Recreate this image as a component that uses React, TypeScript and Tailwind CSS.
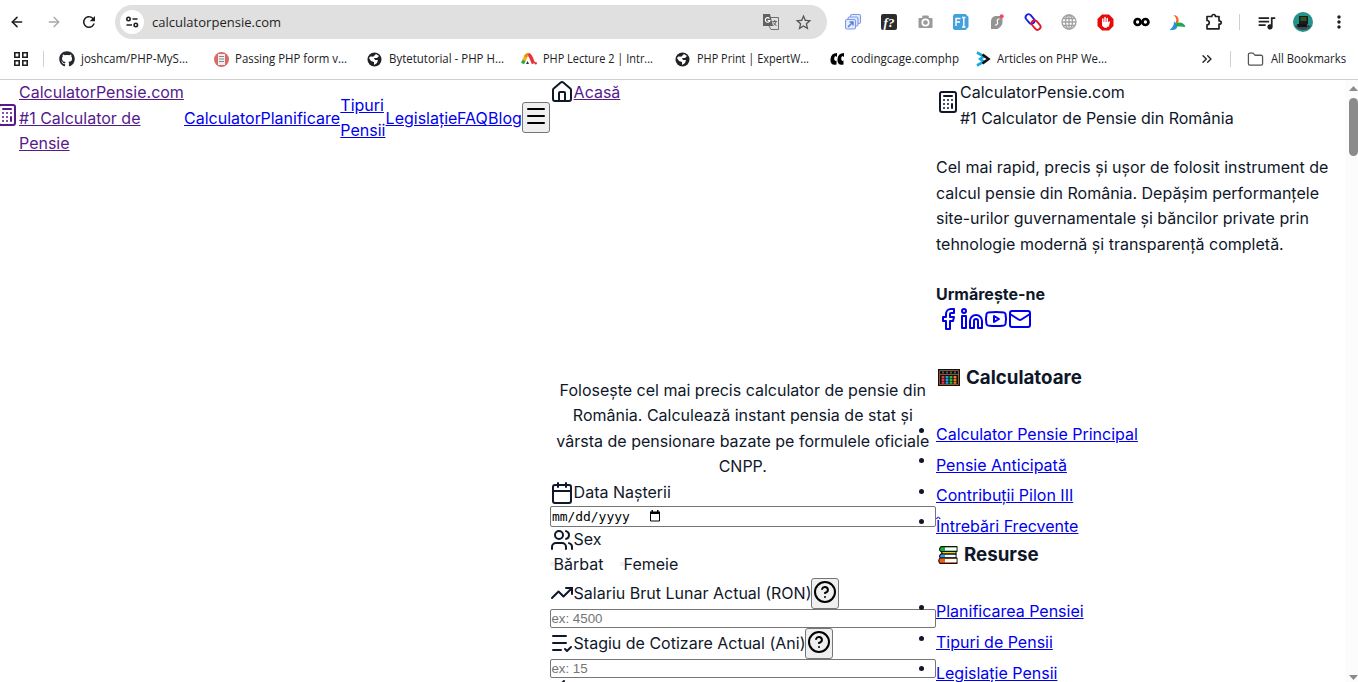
import React from 'react';
import {
  ArrowLeft, ArrowRight, Calculator, Menu, House, Calendar, Users, TrendingUp,
  CircleQuestionMark, Facebook, Linkedin, Youtube, Mail, Folder, ChevronsRight,
} from 'lucide-react';
import { FaGithub } from 'react-icons/fa';
import { MdRefresh, MdQueueMusic, MdStarBorder, MdMoreVert } from 'react-icons/md';

const Cell = ({ w = 'w-9', children }: { w?: string; children: React.ReactNode }) => (
  <div className={`${w} flex h-full shrink-0 items-center justify-center`}>{children}</div>
);

const Tune = () => (
  <svg width="14" height="14" viewBox="0 0 14 14" fill="none" stroke="#202124" strokeWidth="1.6">
    <circle cx="3.5" cy="4" r="1.7" /><path d="M7.5 4H12.500M1.5 10H7" /><circle cx="10.8" cy="10" r="1.7" />
  </svg>
);

const Extensions = () => (
  <>
    <Cell>
      <svg width="18" height="18" viewBox="0 0 18 18" fill="#e4ebff" stroke="#7b9bea" strokeWidth="1.1">
        <rect x="6.5" y="1.5" width="10" height="9" rx="1.5" /><rect x="4" y="4" width="10" height="9" rx="1.5" /><rect x="1.5" y="6.5" width="10" height="9.5" rx="1.5" />
        <path d="M4 14 9 9M5.5 9H9v3.500" fill="none" stroke="#587fdd" strokeWidth="1.5" />
      </svg>
    </Cell>
    <Cell><div className="flex h-4 w-4 items-center justify-center rounded-[2px] bg-[#2c2c2c] font-['Liberation_Serif',serif] text-[13px] leading-none font-bold text-white italic">f?</div></Cell>
    <Cell>
      <svg width="15" height="14" viewBox="0 0 15 14">
        <path d="M1.500 3h2.700V1.500Q4.200.5 5.200.5h4.600q1 0 1 1V3h2.700q1 0 1 1v8q0 1-1 1h-12q-1 0-1-1V4q0-1 1-1z" fill="#9a9a9a" /><circle cx="7.500" cy="7.500" r="3.200" fill="none" stroke="#fff" strokeWidth="1.700" />
      </svg>
    </Cell>
    <Cell>
      <svg width="16" height="16" viewBox="0 0 16 16">
        <path d="M1.500 0h11l3 3v10l-3 3h-11L0 14.500V1.500z" fill="#43a0de" />
        <path d="M3 12V4.500h4.500M3 8h4M9 3.500h3.500M9 13h3.500M10.800 3.500V13" stroke="#fff" strokeWidth="1.4" fill="none" />
      </svg>
    </Cell>
    <Cell>
      <svg width="14" height="16" viewBox="0 0 14 16">
        <path d="M5.500 2H12.500v6c0 4-3 5.500-5 7H1V8c0-4 2-5.500 4.500-6z" fill="#949494" />
        <path d="M9.500 5c-2.500 0-2.500 1.500-2 3s-.5 3-2.500 3" stroke="#fff" strokeWidth="1.200" fill="none" /><circle cx="11.700" cy="2.200" r="2" fill="#ff4358" />
      </svg>
    </Cell>
    <Cell>
      <svg width="18" height="18" viewBox="0 0 18 18" fill="none" strokeWidth="1.800">
        <rect x="0.800" y="3" width="10.500" height="6" rx="3" transform="rotate(50 6 6)" stroke="#1919e8" />
        <rect x="6.800" y="9" width="10.500" height="6" rx="3" transform="rotate(50 12 12)" stroke="#e31224" />
      </svg>
    </Cell>
    <Cell>
      <svg width="16" height="16" viewBox="0 0 16 16" fill="none" stroke="#a1a1a1" strokeWidth="1.300">
        <circle cx="8" cy="8" r="7" /><ellipse cx="8" cy="8" rx="3.500" ry="7" /><path d="M8 1v14M1 8h14M2 4.500h12M2 11.500h12" />
      </svg>
    </Cell>
    <Cell>
      <svg width="17" height="17" viewBox="0 0 17 17">
        <path d="M5 .5h7L16.500 5v7L12 16.500H5L.5 12V5z" fill="#e50b0b" />
        <path d="M5.800 9V5M8 8V3.500M10.200 8.500V4.500M12.200 8l-1 4" stroke="#fff" strokeWidth="1.500" strokeLinecap="round" /><path d="M5 8h6.800l-.6 4-1.500 1.800H7.500L5.200 12z" fill="#fff" />
      </svg>
    </Cell>
    <Cell>
      <svg width="17" height="10" viewBox="0 0 17 10" fill="none" stroke="#000" strokeWidth="2.700"><circle cx="4.600" cy="5" r="3" /><circle cx="12.400" cy="5" r="3" /></svg>
    </Cell>
    <Cell>
      <svg width="17" height="17" viewBox="0 0 17 17">
        <path d="M4.500 1c4 0 7 4 4 9.500L6.500 9c1.500-3 1-5.500-2-8z" fill="#ef6a22" /><path d="M5 7.500c0 4-1.500 6-4.500 8.500 5 .5 8-.5 8-5.500z" fill="#2492df" /><path d="M7.500 9c4-1.500 8 0 9 4-4-1-7-.5-10-.5z" fill="#23a65a" />
      </svg>
    </Cell>
    <Cell w="w-[38px]">
      <svg width="18" height="18" viewBox="0 0 18 18" fill="none" stroke="#1f1f1f" strokeWidth="1.700" strokeLinejoin="round">
        <path d="M2 3.500h4.800c0-2.700 3.600-2.700 3.600 0H14v4.300c3 0 3 3.400 0 3.400v4.600H2v-4c3 0 3-4.300 0-4.300z" />
      </svg>
    </Cell>
  </>
);

const Toolbar = () => (
  <div className="flex h-11 items-center text-[#1f1f1f]">
    <Cell w="w-[34px]"><ArrowLeft size={16} strokeWidth={2.300} /></Cell>
    <Cell w="w-[39px]"><ArrowRight size={16} color="#a8a8a8" /></Cell>
    <Cell w="w-8"><MdRefresh size={18} /></Cell>
    <div className="ml-[10px] flex h-[34px] w-[712px] shrink-0 items-center rounded-full bg-[#e0e0e0] pl-[5px]">
      <div className="flex h-6 w-6 items-center justify-center rounded-full bg-white"><Tune /></div>
      <span className="ml-2 flex-1 font-['Open_Sans','Noto_Sans',sans-serif] text-[13px] leading-5 tracking-[0.02px]">calculatorpensie.com</span>
      <Cell w="w-8">
        <svg width="18" height="18" viewBox="0 0 18 18">
          <path d="M8 4.500h8.500v12H9L7 13" fill="#e0e0e0" stroke="#707070" /><path d="M1 1h7l3 12H1z" fill="#616161" />
          <path d="M7.500 5.500a2.300 2.300 0 1 0 .4 2H5.700" stroke="#fff" fill="none" strokeWidth="1.100" /><path d="M10.500 8.500H15M12.700 7v1.500m1.300 0c-.5 2-1.500 3-2.500 4m-.2-3 3.200 3.500" stroke="#616161" fill="none" />
        </svg>
      </Cell>
      <Cell w="w-8"><MdStarBorder size={19} color="#555" /></Cell>
      <div className="w-2" />
    </div>
    <div className="w-2 shrink-0" />
    <Extensions />
    <div className="ml-[6px] h-4 w-px shrink-0 bg-[#d5cdcd]" />
    <Cell w="w-[53px]"><MdQueueMusic size={21} /></Cell>
    <div className="flex w-5 shrink-0 justify-center">
      <svg width="20" height="20" viewBox="0 0 20 20">
        <circle cx="10" cy="10" r="10" fill="#249488" /><path d="M2 14q8-4 16 0a10 10 0 0 1-16 0" fill="#3f4850" /><path d="M6 4h9v8H6z" fill="#161e1b" /><path d="M7.500 6h6M7.500 8h6" stroke="#4d8a31" /><path d="M4 12h10v3H5z" fill="#101417" />
      </svg>
    </div>
    <Cell w="w-[52px]"><MdMoreVert size={20} /></Cell>
  </div>
);

const Globe = () => (
  <svg width="15" height="15" viewBox="0 0 15 15" className="ml-px"><circle cx="7.500" cy="7.500" r="7" fill="#202124" /><path d="M2 6c2-3 4 0 5-2L9 2l3 2-2 2H7l1 2 3 0-1 3-3 2 0-3-3-1z" fill="#fff" /><path d="m8 6 4 0-1 2-3-1z" fill="#202124" /></svg>
);

const bookmarks = [
  { label: 'joshcam/PHP-MyS...', w: 'w-[154px]', fit: 107, icon: <FaGithub size={16} color="#24292f" className="ml-px" /> },
  { label: 'Passing PHP form v...', w: 'w-[154px]', fit: 112, icon: <svg width="15" height="15" viewBox="0 0 15 15" className="ml-[2px]"><circle cx="7.500" cy="7.500" r="7.500" fill="#d96a64" /><rect x="4" y="2" width="7" height="11" fill="#eee" /><path d="M5 4.500h5M5 7h5M5 9.500h5" stroke="#888" /></svg> },
  { label: 'Bytetutorial - PHP H...', w: 'w-[154px]', fit: 115, icon: <Globe /> },
  { label: 'PHP Lecture 2 | Intr...', w: 'w-[154px]', fit: 110, icon: <svg width="16" height="12" viewBox="0 0 16 12" fill="none" strokeWidth="3.400" className="ml-px"><path d="M1.500 10.500 4 5.500" stroke="#27a84a" /><path d="M3 7.500 5 3" stroke="#f9b41b" /><path d="M4.300 4Q6 1 8 1.800" stroke="#f18b19" /><path d="M7.500 1.500Q9 2 10 4.500l2.500 6" stroke="#e63337" /><path d="m5 11 1.500-3L8 11z" fill="#333" /><circle cx="14.700" cy="10.300" r="1.200" fill="#e63337" /></svg> },
  { label: 'PHP Print | ExpertW...', w: 'w-[154px]', fit: 112, icon: <Globe /> },
  { label: 'codingcage.comphp', w: 'w-[146px]', fit: 108, icon: <svg width="15" height="12" viewBox="0 0 15 12" fill="#000" className="ml-[2px]"><path d="M7 0v4L5.500 3Q3.500 4 4.500 7q1 1.500 2 .5v4Q0 13 .500 6 1 0 7 0zM14 0v4l-1.500-1q-2 1-1 4 1 1.500 2 .5v4Q7 13 7.500 6 8 0 14 0z" /></svg> },
  { label: 'Articles on PHP We...', w: 'w-[154px]', fit: 110, icon: <svg width="15" height="16" viewBox="0 0 15 16" fill="none" strokeWidth="2.600" className="ml-[2px]"><path d="M1 1.500l7 4-5 3M1 14.500l7-4-5-3" stroke="#1aa9df" /><path d="m6.500 3.500 6 4.500-6 4.500" stroke="#111" /></svg> },
];

const Bookmarks = () => (
  <div className="flex h-9 items-center border-b border-[#cfcfcf] pb-[5px] font-['Open_Sans','Noto_Sans',sans-serif] text-[12px] leading-4 text-[#202124]">
    <Cell w="w-[42px]">
      <svg width="14" height="14" viewBox="0 0 14 14" fill="none" stroke="#1f1f1f" strokeWidth="1.600"><path d="M.8.8h4.400v4.400H.8zM8.800.8h4.400v4.400H8.800zM.8 8.800h4.400v4.400H.8zM8.800 8.800h4.400v4.400H8.800z" /></svg>
    </Cell>
    <div className="mr-[14px] ml-px h-4 w-px bg-[#d5cdcd]" />
    {bookmarks.map((b) => (
      <div key={b.label} className={`${b.w} flex shrink-0 items-center`}>
        <span className="flex w-[23px] shrink-0 items-center">{b.icon}</span>
        <svg width={b.fit} height="18" className="overflow-visible"><text x="0" y="13" textLength={b.fit} lengthAdjust="spacingAndGlyphs" fill="#202124">{b.label}</text></svg>
      </div>
    ))}
    <ChevronsRight size={16} className="ml-[71px]" />
    <div className="ml-[15px] h-4 w-px bg-[#d5cdcd]" />
    <Folder size={17} strokeWidth={1.800} color="#555" className="mr-[7px] ml-4" />
    <svg width="75" height="18" className="overflow-visible"><text x="0" y="13" textLength="75" lengthAdjust="spacingAndGlyphs" fill="#202124">All Bookmarks</text></svg>
  </div>
);

const link = 'text-[#0000ee] underline';

const Header = () => (
  <header className="flex h-[76.800px] w-[549.600px] shrink-0 items-center">
    <a className="-ml-[5px] flex w-[189px] shrink-0 items-center text-[#551a8b] underline">
      <Calculator size={24} className="mb-[6px] shrink-0" />
      <span>CalculatorPensie.com<br />#1 Calculator de<br />Pensie</span>
    </a>
    <a className={`${link} w-[76.500px] shrink-0`}>Calculator</a>
    <a className={`${link} w-[79.800px] shrink-0`}>Planificare</a>
    <a className={`${link} mb-[0.400px] w-[45.300px] shrink-0`}>Tipuri Pensii</a>
    <a className={`${link} w-[71.500px] shrink-0`}>Legislație</a>
    <a className={`${link} w-[31px] shrink-0`}>FAQ</a>
    <a className={`${link} w-[33.700px] shrink-0`}>Blog</a>
    <button className="mb-[2px] flex h-[31px] w-7 shrink-0 justify-center rounded-[3px] border border-[#767676] bg-[#efefef] pt-px text-black"><Menu size={24} className="shrink-0" /></button>
  </header>
);

const Help = ({ place }: { place: string }) => (
  <span className={`${place} flex h-[31px] w-7 justify-center rounded-[3px] border border-[#767676] bg-[#efefef] pt-px text-black`}><CircleQuestionMark size={24} className="shrink-0" /></span>
);

const Field = ({ children, h }: { children: React.ReactNode; h: string }) => (
  <div className={`${h} flex w-[386px] items-center rounded-[2px] border border-[#767676] bg-white pl-[0.800px] font-['Liberation_Sans',sans-serif] text-[13.333px] leading-none text-[#757575]`}>{children}</div>
);

const Form = () => (
  <main className="w-[386.400px] shrink-0">
    <div className="flex h-[297.600px] items-start"><House size={24} /><a className="text-[#551a8b] underline">Acasă</a></div>
    <p className="h-[102.400px] text-center">Folosește cel mai precis calculator de pensie din România. Calculează instant pensia de stat și vârsta de pensionare bazate pe formulele oficiale CNPP.</p>
    <div className="flex h-[26px] items-start"><Calendar size={24} className="mt-px" />Data Nașterii</div>
    <Field h="h-[21px]">
      <span className="ml-[0.500px] w-[97px] font-['DejaVu_Sans_Mono',monospace] text-[13px] tracking-[-0.040px] text-black">mm/dd/yyyy</span>
      <svg width="12" height="12" viewBox="0 0 12 12"><path d="M1.500 2.500h9v8.500h-9z" fill="none" stroke="#000" /><path d="M1 1.500h10v2.500H1zM2.500 0h1.500v2H2.500zM8 0h1.500v2H8z" /></svg>
    </Field>
    <div className="flex h-[25px] items-start"><Users size={24} className="mt-px" />Sex</div>
    <div className="flex h-[25px] items-center">
      <i className="h-1 w-[4px] bg-[#efefef]" /><span className="w-[66px]">Bărbat</span>
      <i className="h-1 w-[4px] bg-[#efefef]" />Femeie
    </div>
    <div className="flex h-8 items-center"><TrendingUp size={24} className="mt-px" /><span className="pt-px">Salariu Brut Lunar Actual (RON)</span><Help place="mt-px" /></div>
    <Field h="h-[19px]">ex: 4500</Field>
    <div className="flex h-[31px] items-center">
      <svg width="24" height="24" viewBox="0 0 24 24" fill="none" stroke="currentColor" strokeWidth="2" strokeLinecap="round" strokeLinejoin="round"><path d="M3 5h13M3 12h13M3 19h8M15 18l2 2 4-4" /></svg>
      Stagiu de Cotizare Actual (Ani)<Help place="-ml-[0.600px]" />
    </div>
    <Field h="h-[19px]">ex: 15</Field>
    <svg width="24" height="24" viewBox="0 0 24 24" fill="none" stroke="currentColor" strokeWidth="2" strokeLinecap="round"><path d="M12 5l2-2" /></svg>
  </main>
);

const LinkList = ({ items }: { items: string[] }) => (
  <ul>
    {items.map((t) => (
      <li key={t} className="relative h-[30.600px]">
        <i className="absolute top-[5.600px] -left-[17px] h-[5px] w-[5px] rounded-full bg-[#0f172a]" />
        <a className={link}>{t}</a>
      </li>
    ))}
  </ul>
);

const Abacus = () => (
  <svg width="22" height="17" viewBox="0 0 22 17"><path d="M0 0h22v17H0z" fill="#111" /><path d="M1.500 1.500h19v14h-19z" fill="none" stroke="#8a5835" /><path d="M2 5.500h18" stroke="#8a5835" /><g strokeWidth="2.800" strokeDasharray="2.300 .4"><path d="M5 7V15" stroke="#ee3447" /><path d="M9 7V15" stroke="#269ee5" /><path d="M13 7V15" stroke="#27bd3c" /><path d="M17 7V15" stroke="#f47920" /></g><path d="M5 2.500v2M9 2.500v2M13 2.500v2M17 2.500v2" stroke="#555" strokeWidth="2" /></svg>
);

const Books = () => (
  <svg width="20" height="18" viewBox="0 0 20 18"><g stroke="#111" strokeWidth="1.100" strokeLinejoin="round"><path d="M3 .6h16v4.900H3Q0 3.500 3 .6z" fill="#17b526" /><path d="M5 5.500h13v2.500H5Q2 7 5 5.500z" fill="#f5c51b" /><path d="M3 8h15v4H3Q0 10.500 3 8z" fill="#3a96e8" /><path d="M2 12h17v5.400H2Q-.5 15 2 12z" fill="#f75b12" /></g><path d="M7 1.500h11.500v3H7zM7 9h10.500v2H7zM7 13h11.500v3.200H7z" fill="#fff" /></svg>
);

const Footer = () => (
  <footer className="relative w-[409px] shrink-0">
    <div className="flex h-[75px] items-start"><Calculator size={24} className="mt-[10px]" /><div>CalculatorPensie.com<br />#1 Calculator de Pensie din România</div></div>
    <p className="h-[127px] whitespace-nowrap">Cel mai rapid, precis și ușor de folosit instrument de<br />calcul pensie din România. Depășim performanțele<br />site-urilor guvernamentale și băncilor private prin<br />tehnologie modernă și transparență completă.</p>
    <div className="h-[25px] font-bold">Urmărește-ne</div>
    <div className="flex h-[55px] items-start text-[#0000ee]"><Facebook size={24} /><Linkedin size={24} /><Youtube size={24} /><Mail size={24} /></div>
    <h3 className="flex h-[60px] items-start text-[18.720px] leading-[32px] font-bold"><span className="mt-[7px] mr-[6px] ml-[2px]"><Abacus /></span>Calculatoare</h3>
    <div className="h-[117px]"><LinkList items={['Calculator Pensie Principal', 'Pensie Anticipată', 'Contribuții Pilon III', 'Întrebări Frecvente']} /></div>
    <h3 className="flex h-[60.400px] items-start text-[18.720px] leading-[32px] font-bold"><span className="mt-[7px] mr-[6px] ml-[2px]"><Books /></span>Resurse</h3>
    <LinkList items={['Planificarea Pensiei', 'Tipuri de Pensii', 'Legislație Pensii']} />
  </footer>
);

const Scrollbar = () => (
  <div className="flex w-[13px] shrink-0 flex-col items-end bg-[#fcfcfc]">
    <svg width="9" height="5" viewBox="0 0 9 5" className="mt-[6px]"><path d="M0 5 4.500 0 9 5z" fill="#8b8b8b" /></svg>
    <div className="mt-[7px] h-[58px] w-[9px] rounded-full bg-[#8b8b8b]" />
    <svg width="9" height="5" viewBox="0 0 9 5" className="mt-auto mb-[2px]"><path d="M0 0 4.500 5 9 0z" fill="#8b8b8b" /></svg>
  </div>
);

export default function App() {
  return (
    <div className="flex h-[682px] w-[1358px] flex-col overflow-hidden bg-white">
      <div className="h-20 shrink-0"><Toolbar /><Bookmarks /></div>
      <div className="flex h-[602px] items-stretch overflow-hidden font-['Inter',sans-serif] text-[16px] leading-[25.600px] text-[#0f172a]">
        <Header /><Form /><Footer /><Scrollbar />
      </div>
    </div>
  );
}
